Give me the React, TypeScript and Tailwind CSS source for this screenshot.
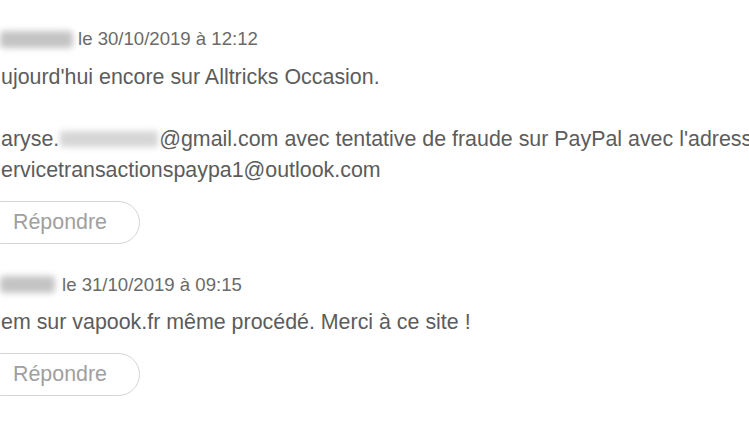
import React from "react";

function Comment({
  blurW,
  gap,
  date,
  lines,
}: {
  blurW: number;
  gap: number;
  date: string;
  lines: React.ReactNode[];
}) {
  return (
    <div className="flex flex-col">
      <div className="flex items-center h-[22px]">
        <div
          className="h-[17px] bg-[#c4c4c4] blur-[3px] rounded-sm"
          style={{ width: blurW, marginRight: gap }}
        />
        <span className="text-[18.6px] text-[#6a6a6a] leading-[22px]">{date}</span>
      </div>
      <div className="mt-[11.5px] text-[21.4px] leading-[31px] text-[#5c5c5c] pl-[1px] whitespace-nowrap">
        {lines.map((l, i) => (
          <div key={i} className="h-[31px]">
            {l}
          </div>
        ))}
      </div>
      <div className="mt-[15px]">
        <div className="ml-[-20px] inline-flex items-center h-[43px] px-[32px] border border-[#d4d4d4] rounded-full text-[21.4px] text-[#a0a0a0]">
          Répondre
        </div>
      </div>
    </div>
  );
}

export default function App() {
  return (
    <div
      className="w-[749px] h-[421px] bg-white overflow-hidden pt-[28px] flex flex-col gap-[30px]"
      style={{ fontFamily: '"Liberation Sans", Arial, sans-serif' }}
    >
      <Comment
        blurW={73}
        gap={5}
        date="le 30/10/2019 à 12:12"
        lines={[
          "ujourd'hui encore sur Alltricks Occasion.",
          "",
          <span key="a" className="inline-flex items-center">
            aryse.
            <span className="inline-block w-[98px] h-[16px] mx-[1px] bg-[#d6d6d6] blur-[3px]" />
            @gmail.com avec tentative de fraude sur PayPal avec l'adresse
          </span>,
          "ervicetransactionspaypa1@outlook.com",
        ]}
      />
      <Comment
        blurW={55}
        gap={7}
        date="le 31/10/2019 à 09:15"
        lines={["em sur vapook.fr même procédé. Merci à ce site !"]}
      />
    </div>
  );
}
